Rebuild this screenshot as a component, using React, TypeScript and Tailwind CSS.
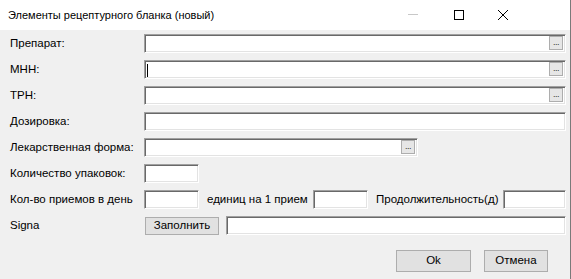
const font = { fontFamily: '"Liberation Sans", Arial, sans-serif' };

function Field({ className = "", cursor = false, browse = false }: { className?: string; cursor?: boolean; browse?: boolean }) {
  return (
    <div
      className={`relative h-[19px] bg-white border-t border-l border-t-[#a0a0a0] border-l-[#a0a0a0] border-b border-r border-b-white border-r-white shadow-[inset_1px_1px_0_#696969,inset_-1px_-1px_0_#e3e3e3] ${className}`}
    >
      {cursor && <div className="absolute left-[2px] top-[3px] w-px h-[13px] bg-black" />}
      {browse && (
        <div className="absolute right-[2px] top-[1px] w-[14px] h-[14px] border border-[#adadad] bg-[#e6e6e6] flex items-end justify-center">
          <span className="text-[9px] leading-[9px] text-[#333] tracking-[-0.5px] mb-[2px]">...</span>
        </div>
      )}
    </div>
  );
}

function Label({ children }: { children: React.ReactNode }) {
  return <div className="w-[134px] shrink-0 text-[11.5px] leading-none text-black">{children}</div>;
}

export default function App() {
  return (
    <div className="w-[571px] h-[279px] bg-[#f0f0f0] border-r border-r-[#7a7a7a] flex flex-col" style={font}>
      <div className="h-[30px] bg-white flex items-center shrink-0">
        <div className="pl-[8px] text-[11px] text-black flex-1">Элементы рецептурного бланка (новый)</div>
        <div className="flex items-center h-full mr-[44px]">
          <svg width="46" height="30" viewBox="0 0 46 30" className="block">
            <line x1="18" y1="14.5" x2="28" y2="14.5" stroke="#c8c8c8" strokeWidth="1" />
          </svg>
          <svg width="44" height="30" viewBox="0 0 44 30" className="block">
            <rect x="18.5" y="10.5" width="9" height="9" fill="none" stroke="#000" strokeWidth="1" />
          </svg>
          <svg width="46" height="30" viewBox="0 0 46 30" className="block">
            <path d="M18 10 L28 20 M28 10 L18 20" stroke="#000" strokeWidth="1" />
          </svg>
        </div>
      </div>

      <div className="flex flex-col gap-[7px] pt-[4px] pl-[10px] pr-[4px]">
        <div className="flex items-center">
          <Label>Препарат:</Label>
          <Field className="flex-1" browse />
        </div>
        <div className="flex items-center">
          <Label>МНН:</Label>
          <Field className="flex-1" browse cursor />
        </div>
        <div className="flex items-center">
          <Label>ТРН:</Label>
          <Field className="flex-1" browse />
        </div>
        <div className="flex items-center">
          <Label>Дозировка:</Label>
          <Field className="flex-1" />
        </div>
        <div className="flex items-center">
          <Label>Лекарственная форма:</Label>
          <Field className="w-[274px]" browse />
        </div>
        <div className="flex items-center">
          <Label>Количество упаковок:</Label>
          <Field className="w-[55px]" />
        </div>
        <div className="flex items-center text-[11.5px] leading-none">
          <Label>Кол-во приемов в день</Label>
          <Field className="w-[55px]" />
          <div className="ml-[8px] w-[106px]">единиц на 1 прием</div>
          <Field className="w-[55px]" />
          <div className="ml-[8px] w-[127px]">Продолжительность(д)</div>
          <Field className="flex-1" />
        </div>
        <div className="flex items-center">
          <Label>Signa</Label>
          <button className="ml-[1px] w-[74px] h-[18px] border border-[#adadad] bg-[#e1e1e1] text-[11.5px] leading-none text-black">
            Заполнить
          </button>
          <Field className="ml-[7px] flex-1" />
        </div>
      </div>

      <div className="flex justify-end gap-[13px] mt-[15px] pr-[22px]">
        <button className="w-[75px] h-[22px] border border-[#adadad] bg-[#e1e1e1] text-[11.5px] text-black">Ok</button>
        <button className="w-[64px] h-[22px] border border-[#adadad] bg-[#e1e1e1] text-[11.5px] text-black">Отмена</button>
      </div>
    </div>
  );
}
